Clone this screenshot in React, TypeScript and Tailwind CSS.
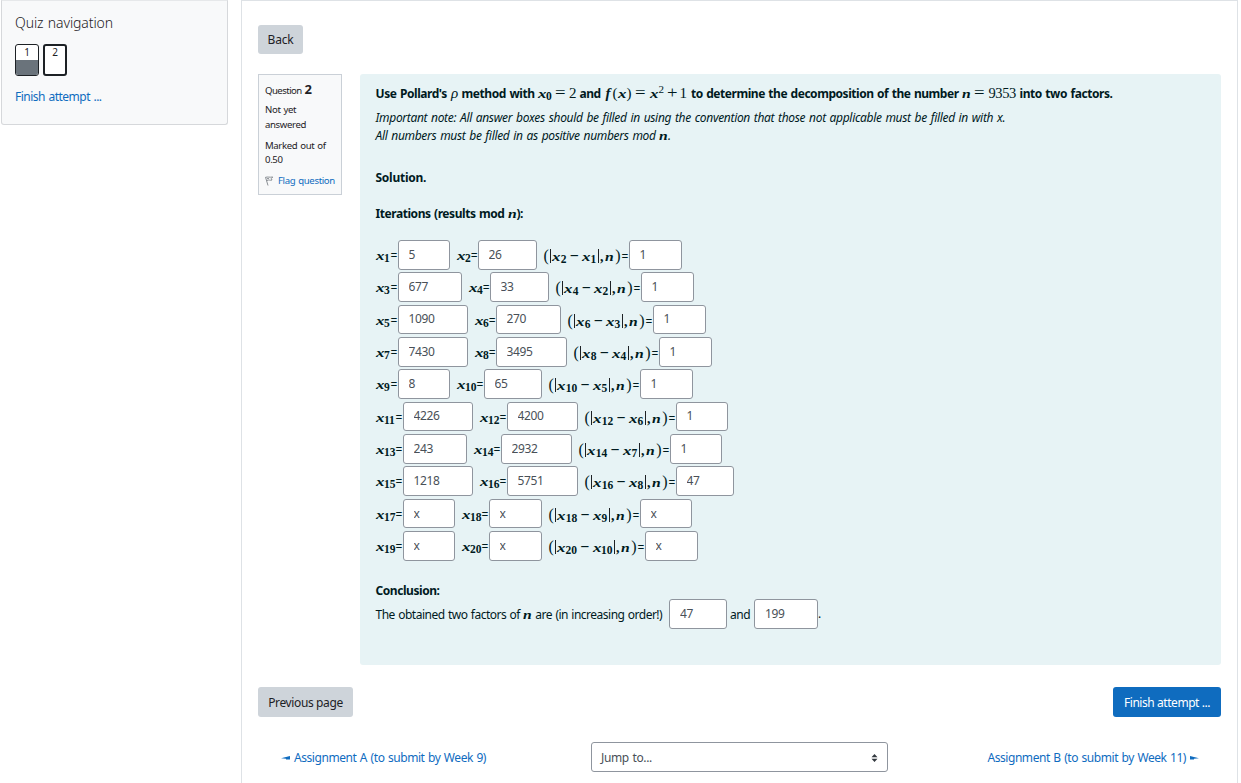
import React from "react";

type Row = {
  a: number; av: string; aw: number; al: number;
  bv: string; bw: number; bl: number;
  c: number; cv: string; cw: number; cl: number;
};

// al / bl / cl: widths of the labels, aw / bw / cw: widths of the answer boxes
const rows: Row[] = [
  { a: 1, al: 22, av: "5", aw: 52, bl: 21, bv: "26", bw: 59, c: 1, cl: 85, cv: "1", cw: 53 },
  { a: 3, al: 22, av: "677", aw: 64, bl: 21, bv: "33", bw: 59, c: 2, cl: 85, cv: "1", cw: 53 },
  { a: 5, al: 22, av: "1090", aw: 70, bl: 21, bv: "270", bw: 65, c: 3, cl: 85, cv: "1", cw: 53 },
  { a: 7, al: 22, av: "7430", aw: 70, bl: 21, bv: "3495", bw: 71, c: 4, cl: 85, cv: "1", cw: 53 },
  { a: 9, al: 22, av: "8", aw: 52, bl: 27, bv: "65", bw: 58, c: 5, cl: 91, cv: "1", cw: 53 },
  { a: 11, al: 27, av: "4226", aw: 70, bl: 27, bv: "4200", bw: 71, c: 6, cl: 91, cv: "1", cw: 52 },
  { a: 13, al: 27, av: "243", aw: 64, bl: 27, bv: "2932", bw: 71, c: 7, cl: 91, cv: "1", cw: 52 },
  { a: 15, al: 27, av: "1218", aw: 70, bl: 27, bv: "5751", bw: 71, c: 8, cl: 91, cv: "47", cw: 58 },
  { a: 17, al: 27, av: "x", aw: 52, bl: 27, bv: "x", bw: 53, c: 9, cl: 91, cv: "x", cw: 52 },
  { a: 19, al: 27, av: "x", aw: 52, bl: 27, bv: "x", bw: 53, c: 10, cl: 96, cv: "x", cw: 53 },
];

const serif = "font-['Liberation_Serif',serif]";

function X({ s }: { s: number }) {
  return (
    <span className="inline-flex items-baseline font-['Liberation_Serif',serif] font-bold tracking-normal">
      <i className="inline-block w-[8.5px] origin-left scale-x-130 text-[13px] leading-4">x</i>
      <span className="relative top-[2px] text-[11.5px] leading-4">{s}</span>
    </span>
  );
}

function N() {
  return <i className="inline-block w-[8.5px] origin-left scale-x-120 font-['Liberation_Serif',serif] text-[13px] leading-4 font-bold">n</i>;
}

function Label({ s, w }: { s: number; w: number }) {
  return (
    <span className="flex h-8 shrink-0 items-baseline justify-between pt-[8px]" style={{ width: w }}>
      <X s={s} />
      <span className="w-[7px] text-[12px] leading-4">=</span>
    </span>
  );
}

function Gcd({ p, q, w }: { p: number; q: number; w: number }) {
  return (
    <span className="flex h-8 shrink-0 items-baseline justify-between pt-[8px] leading-4 tracking-normal" style={{ width: w }}>
      <span className={`${serif} w-[5px] text-[16px]`}>(</span>
      <span className="mt-px h-[14px] w-px self-start bg-[#1d2125]" />
      <X s={p} />
      <span className={`${serif} mx-[2px] w-[9px] text-[16px] font-bold`}>−</span>
      <X s={q} />
      <span className="mt-px h-[14px] w-px self-start bg-[#1d2125]" />
      <span className={`${serif} w-[4px] text-[14px] font-bold`}>,</span>
      <N />
      <span className={`${serif} w-[5px] text-[16px]`}>)</span>
      <span className="w-[7px] text-[12px]">=</span>
    </span>
  );
}

function Box({ v, w }: { v: string; w: number }) {
  return (
    <input
      readOnly
      value={v}
      style={{ width: w }}
      className="h-[29.5px] shrink-0 rounded-[3px] border border-[#8f959e] bg-white pb-px pl-[10px] text-[12px] tracking-[-0.35px] text-[#495057] outline-none"
    />
  );
}

export default function App() {
  return (
    <div className="flex h-[783px] w-[1241px] overflow-hidden bg-white font-['Noto_Sans',sans-serif] text-[12px] leading-[18px] tracking-[-0.44px] [word-spacing:0.8px] text-[#1d2125]">
      <aside className="ml-px h-[125px] w-[227px] shrink-0 rounded-b-[3px] border border-t-[#e6e8ea] border-[#d6d8db] bg-[#f8f9fa] pt-[13px] pl-[13px]">
        <h2 className="text-[14px] leading-[18px] font-light tracking-[-0.1px]">Quiz navigation</h2>
        <div className="mt-[12px] flex gap-[4px] text-center text-[10px] leading-[14px]">
          <div className="flex h-8 w-6 flex-col overflow-hidden rounded-[3px] border border-[#1d2125] bg-white">
            <span className="h-[15px]">1</span>
            <span className="flex-1 bg-[#6a737b]" />
          </div>
          <div className="h-8 w-6 rounded-[3px] border-2 border-[#1d2125] bg-white leading-[13px]">2</div>
        </div>
        <a className="mt-[12px] block tracking-[-0.5px] text-[#0f6cbf]">Finish attempt ...</a>
      </aside>

      <main className="ml-[13px] h-[790px] w-[997px] shrink-0 border border-[#dee2e6] px-4 pt-6">
        <button className="block h-[29px] w-[45px] rounded-[3px] bg-[#ced4da] tracking-[-0.2px]">Back</button>
        <div className="mt-[20px] flex gap-[18px]">
          <section className="h-[121px] w-[84px] shrink-0 border border-[#cad0d7] bg-[#f8f9fa] pt-[6px] pl-[6px] text-[9.6px] leading-[15px] tracking-[-0.36px] whitespace-nowrap">
            <h3 className="h-[21px] leading-[17px] tracking-[-0.55px]">
              Question <b className="text-[13px]">2</b>
            </h3>
            <div>Not yet<br />answered</div>
            <div className="mt-[7px] leading-[14px]">Marked out of<br />0.50</div>
            <div className="mt-[6px] flex items-center gap-[5px] text-[#0f6cbf]">
              <svg width="8" height="10" viewBox="0 0 8 10" fill="none" stroke="#8a8f94" strokeWidth="1">
                <path d="M.5 1.2 3 9.5M.5 1.3C3 .6 4.5 1.6 7.8 1L6.3 2.6 7 4C5 4.8 4 3.4 2 4.5M2 2.6h2" />
              </svg>
              <span className="tracking-[-0.36px]">Flag question</span>
            </div>
          </section>

          <section className="h-[591px] w-[861px] rounded-[3px] bg-[#e7f3f5] pl-[15.5px] whitespace-nowrap text-[#001a1e]">
            <p className="mt-[10px] flex h-[20px] items-baseline font-bold">
              <span className="w-[75.5px]">Use Pollard's</span>
              <i className={`${serif} w-[10.5px] text-[15px] font-normal`}>ρ</i>
              <span className="w-[76px] tracking-[-0.42px]">method with</span>
              <span className="w-[17.5px]"><X s={0} /></span>
              <span className={`${serif} w-[14px] origin-left scale-x-110 text-[17px] font-normal`}>=</span>
              <span className={`${serif} w-[10.5px] text-[15px] font-normal`}>2</span>
              <span className="w-[26px] tracking-[-0.5px]">and</span>
              <span className={`${serif} flex w-[85.5px] items-baseline text-[15px] font-normal`}>
                <i className="w-[7px] font-bold">f</i>
                <span className="w-[5px]">(</span>
                <i className="w-[9px] origin-left scale-x-130 text-[13px] font-bold">x</i>
                <span className="w-[8px]">)</span>
                <span className="w-[15px] origin-left scale-x-110 text-[17px]">=</span>
                <i className="w-[9px] origin-left scale-x-130 text-[13px] font-bold">x</i>
                <span className="relative -top-[5px] w-[8px] text-[11px]">2</span>
                <span className="w-[13px] origin-left scale-x-110 text-[17px]">+</span>
                <span>1</span>
              </span>
              <span className="w-[270.5px] tracking-[-0.46px]">to determine the decomposition of the number</span>
              <span className="w-[12px]"><N /></span>
              <span className={`${serif} w-[15px] origin-left scale-x-110 text-[17px] font-normal`}>=</span>
              <span className={`${serif} w-[31px] text-[14.5px] font-normal tracking-[-0.4px]`}>9353</span>
              <span className="tracking-[-0.44px]">into two factors.</span>
            </p>
            <p className="mt-[5px] tracking-[-0.32px] [word-spacing:1px] italic">
              Important note: All answer boxes should be filled in using the convention that those not applicable must be filled in with x.
              <br />
              All numbers must be filled in as positive numbers mod <N />.
            </p>
            <p className="mt-[24px] font-bold tracking-[-0.25px]">Solution.</p>
            <p className="mt-[18px] font-bold">Iterations (results mod <N />):</p>

            <div className="mt-[17px] h-[324px]">
              {rows.map((r) => (
                <div key={r.a} className="flex h-[32.35px] items-start">
                  <Label s={r.a} w={r.al} />
                  <Box v={r.av} w={r.aw} />
                  <span className="w-[7px] shrink-0" />
                  <Label s={r.a + 1} w={r.bl} />
                  <Box v={r.bv} w={r.bw} />
                  <span className="w-[7px] shrink-0" />
                  <Gcd p={r.a + 1} q={r.c} w={r.cl} />
                  <Box v={r.cv} w={r.cw} />
                </div>
              ))}
            </div>

            <p className="mt-[18px] font-bold">Conclusion:</p>
            <div className="-mt-px flex h-[30px] items-center">
              <span className="w-[293.5px] pt-px tracking-[-0.51px]">The obtained two factors of <N /> are (in increasing order!)</span>
              <Box v="47" w={58} />
              <span className="w-[27px] pt-px pl-[3px]">and</span>
              <Box v="199" w={64} />
              <span>.</span>
            </div>
          </section>
        </div>

        <div className="mt-[22px] flex justify-between">
          <button className="h-[30px] w-[95px] rounded-[3px] bg-[#ced4da] pt-[2px] tracking-[-0.38px]">Previous page</button>
          <button className="h-[30px] w-[108px] rounded-[3px] bg-[#0f6cbf] pt-[2px] text-white">Finish attempt ...</button>
        </div>
        <div className="mt-[25px] flex h-[30px] items-center text-[#0f6cbf]">
          <a className="flex w-[333px] items-center gap-[3px] pt-[2px] pl-[23px]">
            <svg width="10" height="6" viewBox="0 0 10 6" fill="currentColor"><path d="M0 3.2 9 1V4.5H5V3.8Z" /></svg>
            Assignment A (to submit by Week 9)
          </a>
          <div className="flex h-[30px] w-[297px] items-center justify-between rounded-[3px] border border-[#8f959e] bg-white pt-px pr-[9px] pl-[9px] tracking-[-0.35px] text-[#495057]">
            Jump to...
            <svg width="7" height="8" viewBox="0 0 7 8" fill="#343a40"><path d="M3.5 0 6.5 3.2H.5ZM3.5 8 6.5 4.8H.5Z" /></svg>
          </div>
          <a className="flex flex-1 items-center justify-end gap-[3px] pt-[2px] pr-[22px]">
            Assignment B (to submit by Week 11)
            <svg width="10" height="6" viewBox="0 0 10 6" fill="currentColor"><path d="M10 3.2 1 1V4.5H5V3.8Z" /></svg>
          </a>
        </div>
      </main>
    </div>
  );
}
